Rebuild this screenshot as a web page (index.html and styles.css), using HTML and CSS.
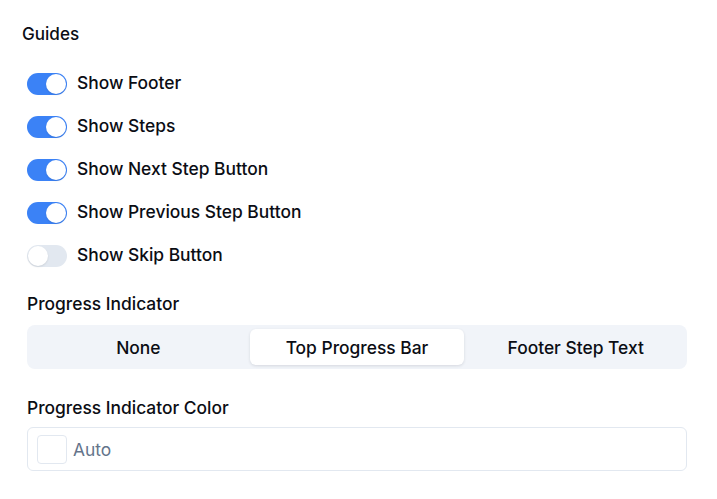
FILE: index.html
```html
<!DOCTYPE html>
<html>
<head>
<meta charset="utf-8">
<link rel="stylesheet" href="styles.css">
</head>
<body>
<div class="panel">
  <h2 class="title">Guides</h2>
  <div class="toggles">
    <div class="row"><span class="switch on"><span class="knob"></span></span><span class="label">Show Footer</span></div>
    <div class="row"><span class="switch on"><span class="knob"></span></span><span class="label">Show Steps</span></div>
    <div class="row"><span class="switch on"><span class="knob"></span></span><span class="label">Show Next Step Button</span></div>
    <div class="row"><span class="switch on"><span class="knob"></span></span><span class="label">Show Previous Step Button</span></div>
    <div class="row"><span class="switch"><span class="knob"></span></span><span class="label">Show Skip Button</span></div>
  </div>
  <div class="field">
    <div class="field-label">Progress Indicator</div>
    <div class="segmented">
      <div class="seg">None</div>
      <div class="seg active">Top Progress Bar</div>
      <div class="seg">Footer Step Text</div>
    </div>
  </div>
  <div class="field color-field">
    <div class="field-label">Progress Indicator Color</div>
    <div class="input">
      <span class="swatch"></span>
      <span class="placeholder">Auto</span>
    </div>
  </div>
</div>
</body>
</html>
```

FILE: styles.css
```css
* { box-sizing: border-box; }
html, body { margin: 0; padding: 0; background: #fff; }
body {
  font-family: Inter, "Noto Sans", sans-serif;
  color: #0b0d14;
}
.panel {
  padding: 24px 30px 0 22px;
}
.title {
  margin: 0;
  font-size: 17.1px;
  font-weight: 500;
  line-height: 20px;
}
.toggles {
  display: flex;
  flex-direction: column;
  gap: 19px;
  padding: 27px 0 0 5px;
}
.row {
  display: flex;
  align-items: center;
  gap: 10px;
  height: 24px;
}
.switch {
  position: relative;
  width: 40px;
  height: 22px;
  border-radius: 11px;
  background: #e2e8f0;
  display: inline-block;
  flex: none;
  margin-top: 1px;
}
.switch.on { background: #3b82f6; }
.knob {
  position: absolute;
  top: 1px;
  left: 1px;
  width: 20px;
  height: 20px;
  border-radius: 50%;
  background: #fff;
  box-shadow: 0 1px 2px rgba(0,0,0,0.1);
}
.switch.on .knob { left: 19px; }
.label {
  font-size: 17.4px;
  font-weight: 500;
  line-height: 20px;
}
.field {
  padding-left: 5px;
  margin-top: 27px;
}
.field-label {
  font-size: 17.4px;
  font-weight: 500;
  line-height: 20px;
  margin-bottom: 11px;
}
.segmented {
  display: grid;
  grid-template-columns: 1fr 1fr 1fr;
  gap: 4px;
  padding: 4px;
  background: #f1f4f9;
  border-radius: 8px;
  height: 44px;
}
.seg {
  display: flex;
  align-items: center;
  justify-content: center;
  font-size: 17.4px;
  font-weight: 500;
  border-radius: 6px;
}
.seg.active {
  background: #fff;
  box-shadow: 0 1px 3px rgba(15,23,42,0.12);
}
.color-field { margin-top: 29px; }
.color-field .field-label { margin-bottom: 9px; }
.input {
  display: flex;
  align-items: center;
  gap: 6px;
  height: 44px;
  padding: 0 9px;
  border: 1px solid #e2e8f0;
  border-radius: 6px;
}
.swatch {
  width: 30px;
  height: 29px;
  border: 1px solid #e2e8f0;
  border-radius: 4px;
  background: #fff;
}
.placeholder {
  font-size: 17.4px;
  color: #64748b;
}
```
